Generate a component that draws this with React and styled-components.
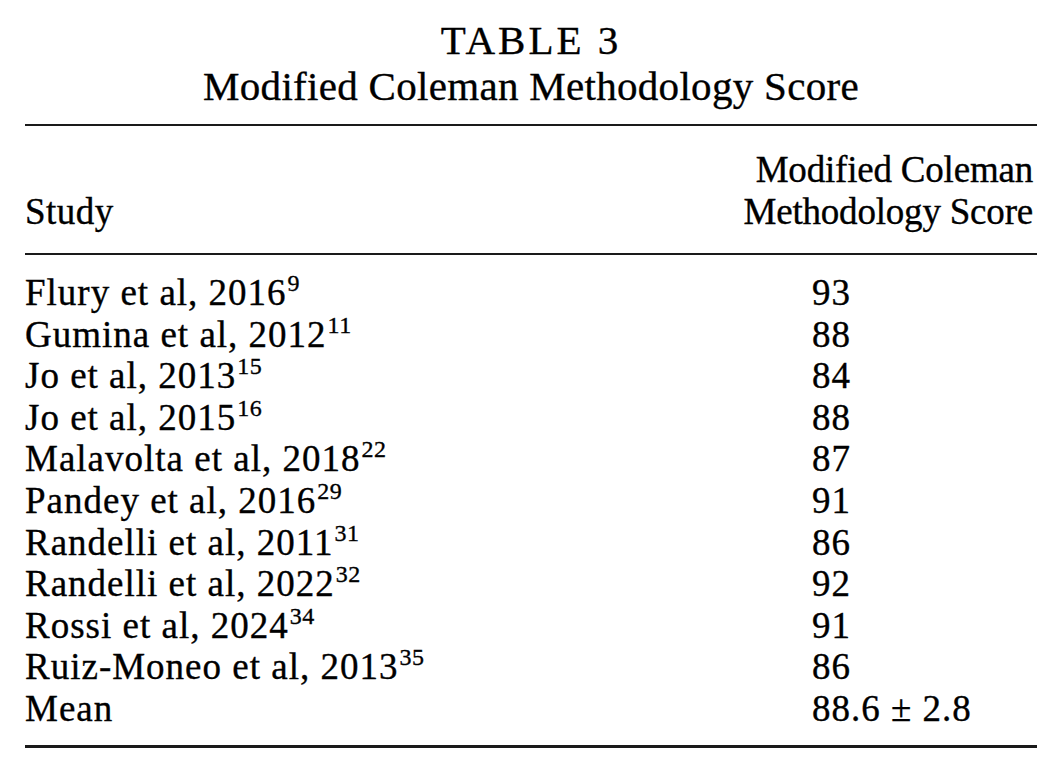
import React from "react"
import styled, { createGlobalStyle } from "styled-components"

const GlobalStyle = createGlobalStyle`
  html, body {
    margin: 0;
    padding: 0;
    background: #fff;
  }
  body {
    font-family: "Liberation Serif", "Times New Roman", serif;
    color: #000;
    -webkit-text-stroke: 0.35px #000;
  }
`

const Page = styled.div`
  width: 1063px;
  height: 773px;
  box-sizing: border-box;
  padding: 17px 26px 0 25px;
  background: #fff;
`

const Caption = styled.div`
  text-align: center;
  font-size: 41px;
  line-height: 46px;
  letter-spacing: 0.3px;
  margin-bottom: 15px;
`

const CaptionLabel = styled.div`
  letter-spacing: 3px;
`

const Rule = styled.div`
  height: ${p => p.thick || 2}px;
  background: #1a1a1a;
`

const Table = styled.div`
  font-size: 37px;
  line-height: 41.6px;
`

const HeadRow = styled.div`
  display: flex;
  align-items: flex-end;
  justify-content: space-between;
  padding: 23px 0 20px;
  line-height: 42px;
`

const HeadCell = styled.div`
  text-align: ${p => (p.right ? "right" : "left")};
  padding-right: ${p => (p.right ? "4px" : "0")};
  letter-spacing: ${p => (p.right ? "-0.2px" : "0.5px")};
`

const Body = styled.div`
  padding: 17px 0 15px;
`

const Row = styled.div`
  display: grid;
  grid-template-columns: 787px 1fr;
  height: 41.6px;
  letter-spacing: 1px;
`

const Sup = styled.sup`
  font-size: 24px;
  line-height: 0;
  vertical-align: 0;
  position: relative;
  top: -14px;
  margin-left: 1px;
  letter-spacing: 0.5px;
`

const rows = [
  ["Flury et al, 2016", "9", "93"],
  ["Gumina et al, 2012", "11", "88"],
  ["Jo et al, 2013", "15", "84"],
  ["Jo et al, 2015", "16", "88"],
  ["Malavolta et al, 2018", "22", "87"],
  ["Pandey et al, 2016", "29", "91"],
  ["Randelli et al, 2011", "31", "86"],
  ["Randelli et al, 2022", "32", "92"],
  ["Rossi et al, 2024", "34", "91"],
  ["Ruiz-Moneo et al, 2013", "35", "86"],
  ["Mean", null, "88.6 ± 2.8"]
]

export default function App() {
  return (
    <Page>
      <GlobalStyle />
      <Caption>
        <CaptionLabel>TABLE 3</CaptionLabel>
        Modified Coleman Methodology Score
      </Caption>
      <Rule />
      <Table>
        <HeadRow>
          <HeadCell>Study</HeadCell>
          <HeadCell right>
            Modified Coleman
            <br />
            Methodology Score
          </HeadCell>
        </HeadRow>
        <Rule />
        <Body>
          {rows.map(([study, ref, score]) => (
            <Row key={study + score}>
              <span>
                {study}
                {ref && <Sup>{ref}</Sup>}
              </span>
              <span>{score}</span>
            </Row>
          ))}
        </Body>
        <Rule thick={3} />
      </Table>
    </Page>
  )
}
